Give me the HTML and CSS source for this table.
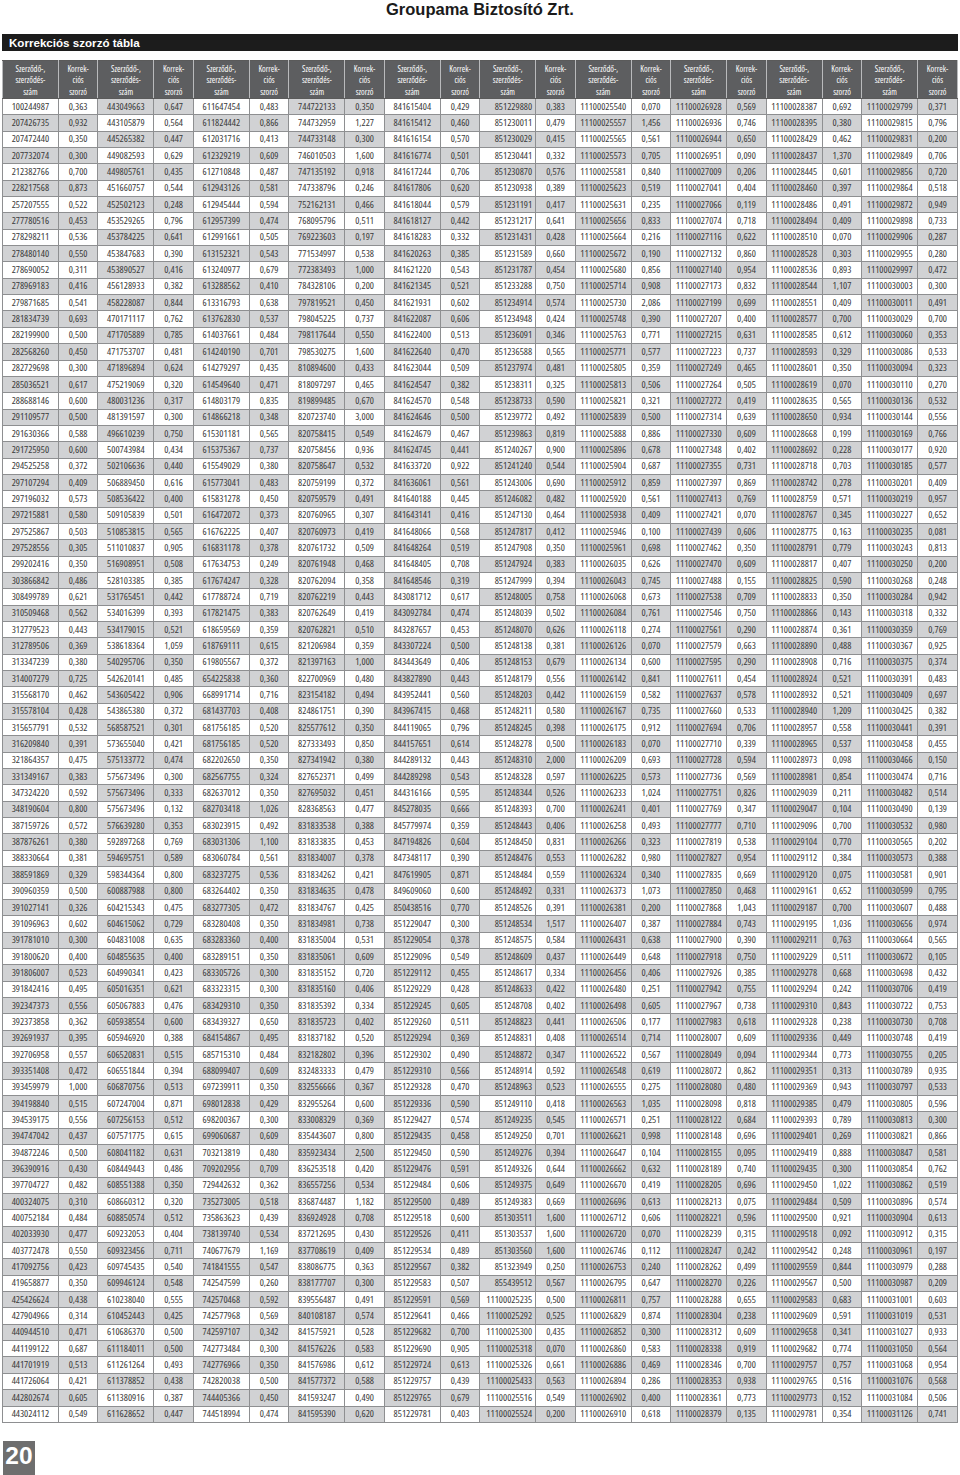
FILE: index.html
```html
<!DOCTYPE html>
<html lang="hu">
<head>
<meta charset="utf-8">
<title>Korrekciós szorzó tábla</title>
<link rel="stylesheet" href="styles.css">
</head>
<body>
<div class="page">
<h1 class="company">Groupama Biztosító Zrt.</h1>
<div class="section-bar">Korrekciós szorzó tábla</div>
<table class="corr-table">
<colgroup>
<col class="c-num"><col class="c-fac"><col class="c-num"><col class="c-fac"><col class="c-num"><col class="c-fac"><col class="c-num"><col class="c-fac"><col class="c-num"><col class="c-fac">
<col class="c-num"><col class="c-fac"><col class="c-num"><col class="c-fac"><col class="c-num"><col class="c-fac"><col class="c-num"><col class="c-fac"><col class="c-num"><col class="c-fac">
</colgroup>
<thead>
<tr class="head-row">
<th>Szerződő-,<br>szerződés-<br>szám</th><th>Korrek-<br>ciós<br>szorzó</th>
<th>Szerződő-,<br>szerződés-<br>szám</th><th>Korrek-<br>ciós<br>szorzó</th>
<th>Szerződő-,<br>szerződés-<br>szám</th><th>Korrek-<br>ciós<br>szorzó</th>
<th>Szerződő-,<br>szerződés-<br>szám</th><th>Korrek-<br>ciós<br>szorzó</th>
<th>Szerződő-,<br>szerződés-<br>szám</th><th>Korrek-<br>ciós<br>szorzó</th>
<th>Szerződő-,<br>szerződés-<br>szám</th><th>Korrek-<br>ciós<br>szorzó</th>
<th>Szerződő-,<br>szerződés-<br>szám</th><th>Korrek-<br>ciós<br>szorzó</th>
<th>Szerződő-,<br>szerződés-<br>szám</th><th>Korrek-<br>ciós<br>szorzó</th>
<th>Szerződő-,<br>szerződés-<br>szám</th><th>Korrek-<br>ciós<br>szorzó</th>
<th>Szerződő-,<br>szerződés-<br>szám</th><th>Korrek-<br>ciós<br>szorzó</th>
</tr>
</thead>
<tbody>
<tr><td>100244987<td>0,363<td>443049663<td>0,647<td>611647454<td>0,483<td>744722133<td>0,350<td>841615404<td>0,429<td>851229880<td>0,383<td>11100025540<td>0,070<td>11100026928<td>0,569<td>11100028387<td>0,692<td>11100029799<td>0,371
<tr><td>207426735<td>0,932<td>443105879<td>0,564<td>611824442<td>0,866<td>744732959<td>1,227<td>841615412<td>0,460<td>851230011<td>0,479<td>11100025557<td>1,456<td>11100026936<td>0,746<td>11100028395<td>0,380<td>11100029815<td>0,796
<tr><td>207472440<td>0,350<td>445265382<td>0,447<td>612031716<td>0,413<td>744733148<td>0,300<td>841616154<td>0,570<td>851230029<td>0,415<td>11100025565<td>0,561<td>11100026944<td>0,650<td>11100028429<td>0,462<td>11100029831<td>0,200
<tr><td>207732074<td>0,300<td>449082593<td>0,629<td>612329219<td>0,609<td>746010503<td>1,600<td>841616774<td>0,501<td>851230441<td>0,332<td>11100025573<td>0,705<td>11100026951<td>0,090<td>11100028437<td>1,370<td>11100029849<td>0,706
<tr><td>212382766<td>0,700<td>449805761<td>0,435<td>612710848<td>0,487<td>747135192<td>0,918<td>841617244<td>0,706<td>851230870<td>0,576<td>11100025581<td>0,840<td>11100027009<td>0,206<td>11100028445<td>0,601<td>11100029856<td>0,720
<tr><td>228217568<td>0,873<td>451660757<td>0,544<td>612943126<td>0,581<td>747338796<td>0,246<td>841617806<td>0,620<td>851230938<td>0,389<td>11100025623<td>0,519<td>11100027041<td>0,404<td>11100028460<td>0,397<td>11100029864<td>0,518
<tr><td>257207555<td>0,522<td>452502123<td>0,248<td>612945444<td>0,594<td>752162131<td>0,466<td>841618044<td>0,579<td>851231191<td>0,417<td>11100025631<td>0,235<td>11100027066<td>0,119<td>11100028486<td>0,491<td>11100029872<td>0,949
<tr><td>277780516<td>0,453<td>453529265<td>0,796<td>612957399<td>0,474<td>768095796<td>0,511<td>841618127<td>0,442<td>851231217<td>0,641<td>11100025656<td>0,833<td>11100027074<td>0,718<td>11100028494<td>0,409<td>11100029898<td>0,733
<tr><td>278298211<td>0,536<td>453784225<td>0,641<td>612991661<td>0,505<td>769223603<td>0,197<td>841618283<td>0,332<td>851231431<td>0,428<td>11100025664<td>0,216<td>11100027116<td>0,622<td>11100028510<td>0,070<td>11100029906<td>0,287
<tr><td>278480140<td>0,550<td>453847683<td>0,390<td>613152321<td>0,543<td>771534997<td>0,538<td>841620263<td>0,385<td>851231589<td>0,660<td>11100025672<td>0,190<td>11100027132<td>0,860<td>11100028528<td>0,303<td>11100029955<td>0,280
<tr><td>278690052<td>0,311<td>453890527<td>0,416<td>613240977<td>0,679<td>772383493<td>1,000<td>841621220<td>0,543<td>851231787<td>0,454<td>11100025680<td>0,856<td>11100027140<td>0,954<td>11100028536<td>0,893<td>11100029997<td>0,472
<tr><td>278969183<td>0,416<td>456128933<td>0,382<td>613288562<td>0,410<td>784328106<td>0,200<td>841621345<td>0,521<td>851233288<td>0,750<td>11100025714<td>0,908<td>11100027173<td>0,832<td>11100028544<td>1,107<td>11100030003<td>0,300
<tr><td>279871685<td>0,541<td>458228087<td>0,844<td>613316793<td>0,638<td>797819521<td>0,450<td>841621931<td>0,602<td>851234914<td>0,574<td>11100025730<td>2,086<td>11100027199<td>0,699<td>11100028551<td>0,409<td>11100030011<td>0,491
<tr><td>281834739<td>0,693<td>470171117<td>0,762<td>613762830<td>0,537<td>798045225<td>0,737<td>841622087<td>0,606<td>851234948<td>0,424<td>11100025748<td>0,390<td>11100027207<td>0,400<td>11100028577<td>0,700<td>11100030029<td>0,700
<tr><td>282199900<td>0,500<td>471705889<td>0,785<td>614037661<td>0,484<td>798117644<td>0,550<td>841622400<td>0,513<td>851236091<td>0,346<td>11100025763<td>0,771<td>11100027215<td>0,631<td>11100028585<td>0,612<td>11100030060<td>0,353
<tr><td>282568260<td>0,450<td>471753707<td>0,481<td>614240190<td>0,701<td>798530275<td>1,600<td>841622640<td>0,470<td>851236588<td>0,565<td>11100025771<td>0,577<td>11100027223<td>0,737<td>11100028593<td>0,329<td>11100030086<td>0,533
<tr><td>282729698<td>0,300<td>471896894<td>0,624<td>614279297<td>0,435<td>810894600<td>0,433<td>841623044<td>0,509<td>851237974<td>0,481<td>11100025805<td>0,359<td>11100027249<td>0,465<td>11100028601<td>0,350<td>11100030094<td>0,323
<tr><td>285036521<td>0,617<td>475219069<td>0,320<td>614549640<td>0,471<td>818097297<td>0,465<td>841624547<td>0,382<td>851238311<td>0,325<td>11100025813<td>0,506<td>11100027264<td>0,505<td>11100028619<td>0,070<td>11100030110<td>0,270
<tr><td>288688146<td>0,600<td>480031236<td>0,317<td>614803179<td>0,835<td>819899485<td>0,670<td>841624570<td>0,548<td>851238733<td>0,590<td>11100025821<td>0,321<td>11100027272<td>0,419<td>11100028635<td>0,565<td>11100030136<td>0,532
<tr><td>291109577<td>0,500<td>481391597<td>0,300<td>614866218<td>0,348<td>820723740<td>3,000<td>841624646<td>0,500<td>851239772<td>0,492<td>11100025839<td>0,500<td>11100027314<td>0,639<td>11100028650<td>0,934<td>11100030144<td>0,556
<tr><td>291630366<td>0,588<td>496610239<td>0,750<td>615301181<td>0,565<td>820758415<td>0,549<td>841624679<td>0,467<td>851239863<td>0,819<td>11100025888<td>0,886<td>11100027330<td>0,609<td>11100028668<td>0,199<td>11100030169<td>0,766
<tr><td>291725950<td>0,600<td>500743984<td>0,434<td>615375367<td>0,737<td>820758456<td>0,936<td>841624745<td>0,441<td>851240267<td>0,900<td>11100025896<td>0,678<td>11100027348<td>0,402<td>11100028692<td>0,228<td>11100030177<td>0,920
<tr><td>294525258<td>0,372<td>502106636<td>0,440<td>615549029<td>0,380<td>820758647<td>0,532<td>841633720<td>0,922<td>851241240<td>0,544<td>11100025904<td>0,687<td>11100027355<td>0,731<td>11100028718<td>0,703<td>11100030185<td>0,577
<tr><td>297107294<td>0,409<td>506889450<td>0,616<td>615773041<td>0,483<td>820759199<td>0,372<td>841636061<td>0,561<td>851243006<td>0,690<td>11100025912<td>0,859<td>11100027397<td>0,869<td>11100028742<td>0,278<td>11100030201<td>0,409
<tr><td>297196032<td>0,573<td>508536422<td>0,400<td>615831278<td>0,450<td>820759579<td>0,491<td>841640188<td>0,445<td>851246082<td>0,482<td>11100025920<td>0,561<td>11100027413<td>0,769<td>11100028759<td>0,571<td>11100030219<td>0,957
<tr><td>297215881<td>0,580<td>509105839<td>0,501<td>616472072<td>0,373<td>820760965<td>0,307<td>841643141<td>0,416<td>851247130<td>0,464<td>11100025938<td>0,409<td>11100027421<td>0,070<td>11100028767<td>0,345<td>11100030227<td>0,652
<tr><td>297525867<td>0,503<td>510853815<td>0,565<td>616762225<td>0,407<td>820760973<td>0,419<td>841648066<td>0,568<td>851247817<td>0,412<td>11100025946<td>0,100<td>11100027439<td>0,606<td>11100028775<td>0,163<td>11100030235<td>0,081
<tr><td>297528556<td>0,305<td>511010837<td>0,905<td>616831178<td>0,378<td>820761732<td>0,509<td>841648264<td>0,519<td>851247908<td>0,350<td>11100025961<td>0,698<td>11100027462<td>0,350<td>11100028791<td>0,779<td>11100030243<td>0,813
<tr><td>299202416<td>0,350<td>516908951<td>0,508<td>617634753<td>0,249<td>820761948<td>0,468<td>841648405<td>0,708<td>851247924<td>0,383<td>11100026035<td>0,626<td>11100027470<td>0,609<td>11100028817<td>0,407<td>11100030250<td>0,200
<tr><td>303866842<td>0,486<td>528103385<td>0,385<td>617674247<td>0,328<td>820762094<td>0,358<td>841648546<td>0,319<td>851247999<td>0,394<td>11100026043<td>0,745<td>11100027488<td>0,155<td>11100028825<td>0,590<td>11100030268<td>0,248
<tr><td>308499789<td>0,621<td>531765451<td>0,442<td>617788724<td>0,719<td>820762219<td>0,443<td>843081712<td>0,617<td>851248005<td>0,758<td>11100026068<td>0,673<td>11100027538<td>0,709<td>11100028833<td>0,350<td>11100030284<td>0,942
<tr><td>310509468<td>0,562<td>534016399<td>0,393<td>617821475<td>0,383<td>820762649<td>0,419<td>843092784<td>0,474<td>851248039<td>0,502<td>11100026084<td>0,761<td>11100027546<td>0,750<td>11100028866<td>0,143<td>11100030318<td>0,332
<tr><td>312779523<td>0,443<td>534179015<td>0,521<td>618659569<td>0,359<td>820762821<td>0,510<td>843287657<td>0,453<td>851248070<td>0,626<td>11100026118<td>0,274<td>11100027561<td>0,290<td>11100028874<td>0,361<td>11100030359<td>0,769
<tr><td>312789506<td>0,369<td>538618364<td>1,059<td>618769111<td>0,615<td>821206984<td>0,359<td>843307224<td>0,500<td>851248138<td>0,381<td>11100026126<td>0,070<td>11100027579<td>0,663<td>11100028890<td>0,488<td>11100030367<td>0,925
<tr><td>313347239<td>0,380<td>540295706<td>0,350<td>619805567<td>0,372<td>821397163<td>1,000<td>843443649<td>0,406<td>851248153<td>0,679<td>11100026134<td>0,600<td>11100027595<td>0,290<td>11100028908<td>0,716<td>11100030375<td>0,374
<tr><td>314007279<td>0,725<td>542620141<td>0,485<td>654225838<td>0,360<td>822700969<td>0,480<td>843827890<td>0,443<td>851248179<td>0,556<td>11100026142<td>0,841<td>11100027611<td>0,454<td>11100028924<td>0,521<td>11100030391<td>0,483
<tr><td>315568170<td>0,462<td>543605422<td>0,906<td>668991714<td>0,716<td>823154182<td>0,494<td>843952441<td>0,560<td>851248203<td>0,442<td>11100026159<td>0,582<td>11100027637<td>0,578<td>11100028932<td>0,521<td>11100030409<td>0,697
<tr><td>315578104<td>0,428<td>543865380<td>0,372<td>681437703<td>0,408<td>824861751<td>0,390<td>843967415<td>0,468<td>851248211<td>0,580<td>11100026167<td>0,735<td>11100027660<td>0,533<td>11100028940<td>1,209<td>11100030425<td>0,382
<tr><td>315657791<td>0,532<td>568587521<td>0,301<td>681756185<td>0,520<td>825577612<td>0,350<td>844119065<td>0,796<td>851248245<td>0,398<td>11100026175<td>0,912<td>11100027694<td>0,706<td>11100028957<td>0,558<td>11100030441<td>0,391
<tr><td>316209840<td>0,391<td>573655040<td>0,421<td>681756185<td>0,520<td>827333493<td>0,850<td>844157651<td>0,614<td>851248278<td>0,500<td>11100026183<td>0,070<td>11100027710<td>0,339<td>11100028965<td>0,537<td>11100030458<td>0,455
<tr><td>321864357<td>0,475<td>575133772<td>0,474<td>682202650<td>0,350<td>827341942<td>0,380<td>844289132<td>0,443<td>851248310<td>2,000<td>11100026209<td>0,693<td>11100027728<td>0,594<td>11100028973<td>0,098<td>11100030466<td>0,150
<tr><td>331349167<td>0,383<td>575673496<td>0,300<td>682567755<td>0,324<td>827652371<td>0,499<td>844289298<td>0,543<td>851248328<td>0,597<td>11100026225<td>0,573<td>11100027736<td>0,569<td>11100028981<td>0,854<td>11100030474<td>0,716
<tr><td>347324220<td>0,592<td>575673496<td>0,333<td>682637012<td>0,350<td>827695032<td>0,451<td>844316166<td>0,595<td>851248344<td>0,526<td>11100026233<td>1,024<td>11100027751<td>0,826<td>11100029039<td>0,211<td>11100030482<td>0,514
<tr><td>348190604<td>0,800<td>575673496<td>0,132<td>682703418<td>1,026<td>828368563<td>0,477<td>845278035<td>0,666<td>851248393<td>0,700<td>11100026241<td>0,401<td>11100027769<td>0,347<td>11100029047<td>0,104<td>11100030490<td>0,139
<tr><td>387159726<td>0,572<td>576639280<td>0,353<td>683023915<td>0,492<td>831833538<td>0,388<td>845779974<td>0,359<td>851248443<td>0,406<td>11100026258<td>0,493<td>11100027777<td>0,710<td>11100029096<td>0,700<td>11100030532<td>0,980
<tr><td>387876261<td>0,380<td>592897268<td>0,769<td>683031306<td>1,100<td>831833835<td>0,453<td>847194826<td>0,604<td>851248450<td>0,831<td>11100026266<td>0,323<td>11100027819<td>0,538<td>11100029104<td>0,770<td>11100030565<td>0,202
<tr><td>388330664<td>0,381<td>594695751<td>0,589<td>683060784<td>0,561<td>831834007<td>0,378<td>847348117<td>0,390<td>851248476<td>0,553<td>11100026282<td>0,980<td>11100027827<td>0,954<td>11100029112<td>0,384<td>11100030573<td>0,388
<tr><td>388591869<td>0,329<td>598344364<td>0,800<td>683237275<td>0,536<td>831834262<td>0,421<td>847619905<td>0,871<td>851248484<td>0,559<td>11100026324<td>0,340<td>11100027835<td>0,669<td>11100029120<td>0,075<td>11100030581<td>0,901
<tr><td>390960359<td>0,500<td>600887988<td>0,800<td>683264402<td>0,350<td>831834635<td>0,478<td>849609060<td>0,600<td>851248492<td>0,331<td>11100026373<td>1,073<td>11100027850<td>0,468<td>11100029161<td>0,652<td>11100030599<td>0,795
<tr><td>391027141<td>0,326<td>604215343<td>0,475<td>683277305<td>0,472<td>831834767<td>0,425<td>850438516<td>0,770<td>851248526<td>0,391<td>11100026381<td>0,200<td>11100027868<td>1,043<td>11100029187<td>0,700<td>11100030607<td>0,488
<tr><td>391096963<td>0,602<td>604615062<td>0,729<td>683280408<td>0,350<td>831834981<td>0,738<td>851229047<td>0,300<td>851248534<td>1,517<td>11100026407<td>0,387<td>11100027884<td>0,743<td>11100029195<td>1,036<td>11100030656<td>0,974
<tr><td>391781010<td>0,300<td>604831008<td>0,635<td>683283360<td>0,400<td>831835004<td>0,531<td>851229054<td>0,378<td>851248575<td>0,584<td>11100026431<td>0,638<td>11100027900<td>0,390<td>11100029211<td>0,763<td>11100030664<td>0,565
<tr><td>391800620<td>0,400<td>604855635<td>0,400<td>683289151<td>0,350<td>831835061<td>0,609<td>851229096<td>0,549<td>851248609<td>0,437<td>11100026449<td>0,648<td>11100027918<td>0,750<td>11100029229<td>0,511<td>11100030672<td>0,105
<tr><td>391806007<td>0,523<td>604990341<td>0,423<td>683305726<td>0,300<td>831835152<td>0,720<td>851229112<td>0,455<td>851248617<td>0,334<td>11100026456<td>0,406<td>11100027926<td>0,385<td>11100029278<td>0,668<td>11100030698<td>0,432
<tr><td>391842416<td>0,495<td>605016351<td>0,621<td>683323315<td>0,300<td>831835160<td>0,406<td>851229229<td>0,428<td>851248633<td>0,422<td>11100026480<td>0,251<td>11100027942<td>0,755<td>11100029294<td>0,242<td>11100030706<td>0,419
<tr><td>392347373<td>0,556<td>605067883<td>0,476<td>683429310<td>0,350<td>831835392<td>0,334<td>851229245<td>0,605<td>851248708<td>0,402<td>11100026498<td>0,605<td>11100027967<td>0,738<td>11100029310<td>0,843<td>11100030722<td>0,753
<tr><td>392373858<td>0,362<td>605938554<td>0,600<td>683439327<td>0,650<td>831835723<td>0,402<td>851229260<td>0,511<td>851248823<td>0,441<td>11100026506<td>0,177<td>11100027983<td>0,618<td>11100029328<td>0,238<td>11100030730<td>0,708
<tr><td>392691937<td>0,395<td>605946920<td>0,388<td>684154867<td>0,495<td>831837182<td>0,520<td>851229294<td>0,369<td>851248831<td>0,408<td>11100026514<td>0,714<td>11100028007<td>0,609<td>11100029336<td>0,449<td>11100030748<td>0,419
<tr><td>392706958<td>0,557<td>606520831<td>0,515<td>685715310<td>0,484<td>832182802<td>0,396<td>851229302<td>0,490<td>851248872<td>0,347<td>11100026522<td>0,567<td>11100028049<td>0,094<td>11100029344<td>0,773<td>11100030755<td>0,205
<tr><td>393351408<td>0,472<td>606551844<td>0,394<td>688099407<td>0,609<td>832483333<td>0,479<td>851229310<td>0,566<td>851248914<td>0,592<td>11100026548<td>0,619<td>11100028072<td>0,862<td>11100029351<td>0,313<td>11100030789<td>0,935
<tr><td>393459979<td>1,000<td>606870756<td>0,513<td>697239911<td>0,350<td>832556666<td>0,367<td>851229328<td>0,470<td>851248963<td>0,523<td>11100026555<td>0,275<td>11100028080<td>0,480<td>11100029369<td>0,943<td>11100030797<td>0,533
<tr><td>394198840<td>0,515<td>607247004<td>0,871<td>698012838<td>0,429<td>832955264<td>0,600<td>851229336<td>0,590<td>851249110<td>0,418<td>11100026563<td>1,035<td>11100028098<td>0,818<td>11100029385<td>0,479<td>11100030805<td>0,596
<tr><td>394539175<td>0,556<td>607256153<td>0,512<td>698200367<td>0,300<td>833008329<td>0,369<td>851229427<td>0,574<td>851249235<td>0,545<td>11100026571<td>0,251<td>11100028122<td>0,684<td>11100029393<td>0,789<td>11100030813<td>0,300
<tr><td>394747042<td>0,437<td>607571775<td>0,615<td>699060687<td>0,609<td>835443607<td>0,800<td>851229435<td>0,458<td>851249250<td>0,701<td>11100026621<td>0,998<td>11100028148<td>0,696<td>11100029401<td>0,269<td>11100030821<td>0,866
<tr><td>394872246<td>0,500<td>608041182<td>0,631<td>703213819<td>0,480<td>835923434<td>2,500<td>851229450<td>0,590<td>851249276<td>0,394<td>11100026647<td>0,104<td>11100028155<td>0,095<td>11100029419<td>0,888<td>11100030847<td>0,581
<tr><td>396390916<td>0,430<td>608449443<td>0,486<td>709202956<td>0,709<td>836253518<td>0,420<td>851229476<td>0,591<td>851249326<td>0,644<td>11100026662<td>0,632<td>11100028189<td>0,740<td>11100029435<td>0,300<td>11100030854<td>0,762
<tr><td>397704727<td>0,482<td>608551388<td>0,350<td>729442632<td>0,362<td>836557256<td>0,534<td>851229484<td>0,606<td>851249375<td>0,649<td>11100026670<td>0,419<td>11100028205<td>0,696<td>11100029450<td>1,022<td>11100030862<td>0,519
<tr><td>400324075<td>0,310<td>608660312<td>0,320<td>735273005<td>0,518<td>836874487<td>1,182<td>851229500<td>0,489<td>851249383<td>0,669<td>11100026696<td>0,613<td>11100028213<td>0,075<td>11100029484<td>0,509<td>11100030896<td>0,574
<tr><td>400752184<td>0,484<td>608850574<td>0,512<td>735863623<td>0,439<td>836924928<td>0,708<td>851229518<td>0,600<td>851303511<td>1,600<td>11100026712<td>0,606<td>11100028221<td>0,596<td>11100029500<td>0,921<td>11100030904<td>0,613
<tr><td>402033930<td>0,477<td>609232053<td>0,404<td>738139740<td>0,534<td>837212695<td>0,430<td>851229526<td>0,411<td>851303537<td>1,600<td>11100026720<td>0,070<td>11100028239<td>0,315<td>11100029518<td>0,092<td>11100030912<td>0,315
<tr><td>403772478<td>0,550<td>609323456<td>0,711<td>740677679<td>1,169<td>837708619<td>0,409<td>851229534<td>0,489<td>851303560<td>1,600<td>11100026746<td>0,112<td>11100028247<td>0,242<td>11100029542<td>0,248<td>11100030961<td>0,197
<tr><td>417092756<td>0,423<td>609745435<td>0,540<td>741841555<td>0,547<td>838086775<td>0,363<td>851229567<td>0,382<td>851323949<td>0,250<td>11100026753<td>0,240<td>11100028262<td>0,499<td>11100029559<td>0,844<td>11100030979<td>0,288
<tr><td>419658877<td>0,350<td>609946124<td>0,548<td>742547599<td>0,260<td>838177707<td>0,300<td>851229583<td>0,507<td>855439512<td>0,567<td>11100026795<td>0,647<td>11100028270<td>0,226<td>11100029567<td>0,500<td>11100030987<td>0,209
<tr><td>425426624<td>0,438<td>610238040<td>0,555<td>742570468<td>0,592<td>839556487<td>0,491<td>851229591<td>0,569<td>11100025235<td>0,500<td>11100026811<td>0,757<td>11100028288<td>0,655<td>11100029583<td>0,683<td>11100031001<td>0,603
<tr><td>427904966<td>0,314<td>610452443<td>0,425<td>742577968<td>0,569<td>840108187<td>0,574<td>851229641<td>0,466<td>11100025292<td>0,525<td>11100026829<td>0,874<td>11100028304<td>0,238<td>11100029609<td>0,591<td>11100031019<td>0,531
<tr><td>440944510<td>0,471<td>610686370<td>0,500<td>742597107<td>0,342<td>841575921<td>0,528<td>851229682<td>0,700<td>11100025300<td>0,435<td>11100026852<td>0,300<td>11100028312<td>0,609<td>11100029658<td>0,341<td>11100031027<td>0,933
<tr><td>441199122<td>0,687<td>611184011<td>0,500<td>742773484<td>0,300<td>841576226<td>0,583<td>851229690<td>0,905<td>11100025318<td>0,070<td>11100026860<td>0,583<td>11100028338<td>0,919<td>11100029682<td>0,774<td>11100031050<td>0,564
<tr><td>441701919<td>0,513<td>611261264<td>0,493<td>742776966<td>0,350<td>841576986<td>0,612<td>851229724<td>0,613<td>11100025326<td>0,661<td>11100026886<td>0,469<td>11100028346<td>0,700<td>11100029757<td>0,757<td>11100031068<td>0,954
<tr><td>441726064<td>0,421<td>611378852<td>0,438<td>742820038<td>0,500<td>841577372<td>0,588<td>851229757<td>0,439<td>11100025433<td>0,563<td>11100026894<td>0,286<td>11100028353<td>0,938<td>11100029765<td>0,516<td>11100031076<td>0,568
<tr><td>442802674<td>0,605<td>611380916<td>0,387<td>744405366<td>0,450<td>841593247<td>0,490<td>851229765<td>0,679<td>11100025516<td>0,549<td>11100026902<td>0,400<td>11100028361<td>0,773<td>11100029773<td>0,152<td>11100031084<td>0,506
<tr><td>443024112<td>0,549<td>611628652<td>0,447<td>744518994<td>0,474<td>841595390<td>0,620<td>851229781<td>0,403<td>11100025524<td>0,200<td>11100026910<td>0,618<td>11100028379<td>0,135<td>11100029781<td>0,354<td>11100031126<td>0,741
</tbody>
</table>
<div class="page-number">20</div>
</div>
</body>
</html>
```

FILE: styles.css
```css
html, body {
  margin: 0;
  padding: 0;
  background: #ffffff;
}

.page {
  width: 960px;
  height: 1475px;
  overflow: hidden;
  font-family: "Liberation Sans", Arial, sans-serif;
}

.company {
  margin: 0;
  height: 34px;
  font-size: 16.5px;
  line-height: 18px;
  font-weight: bold;
  text-align: center;
  color: #1a1a1a;
}

.section-bar {
  margin: 0 2px;
  height: 17px;
  padding-left: 7px;
  background: #1c1c1c;
  color: #ffffff;
  font-size: 11.6px;
  line-height: 17px;
  font-weight: bold;
}

.corr-table {
  margin: 9px 2px 0;
  width: 956px;
  border-collapse: collapse;
  table-layout: fixed;
  font-family: "Open Sans", "Noto Sans", sans-serif;
  font-stretch: 75%;
  border: 1px solid #5a5a5a;
}

.c-num { width: 5.84%; }
.c-fac { width: 4.16%; }

.head-row {
  height: 38px;
}

.head-row th {
  background: #5d5e60;
  color: #ffffff;
  font-weight: normal;
  font-size: 8.4px;
  font-stretch: 87%;
  line-height: 11.5px;
  padding: 1px 0 0;
  text-align: center;
  vertical-align: middle;
  border: 1px solid #b9babc;
  border-top-color: #5a5a5a;
  border-bottom-color: #5a5a5a;
  white-space: nowrap;
}

.corr-table tbody tr {
  height: 16.35px;
}

.corr-table td {
  padding: 0;
  font-size: 9.8px;
  line-height: 10px;
  color: #3a3a3a;
  text-align: center;
  vertical-align: middle;
  white-space: nowrap;
  border: 1px solid #8e8f91;
  background: #ffffff;
}

.corr-table td:nth-child(11) {
  text-align: right;
  padding-right: 3px;
}

.corr-table tbody tr:nth-child(even) td:nth-child(4n+1),
.corr-table tbody tr:nth-child(even) td:nth-child(4n+2),
.corr-table tbody tr:nth-child(odd) td:nth-child(4n+3),
.corr-table tbody tr:nth-child(odd) td:nth-child(4n+4) {
  background: #d1d2d4;
}

.page-number {
  margin: 18px 0 0 3px;
  width: 32px;
  height: 34px;
  padding-top: 1px;
  box-sizing: border-box;
  background: #6e6e6e;
  color: #ffffff;
  font-size: 24.5px;
  line-height: 28px;
  font-weight: bold;
  text-align: center;
}
```
